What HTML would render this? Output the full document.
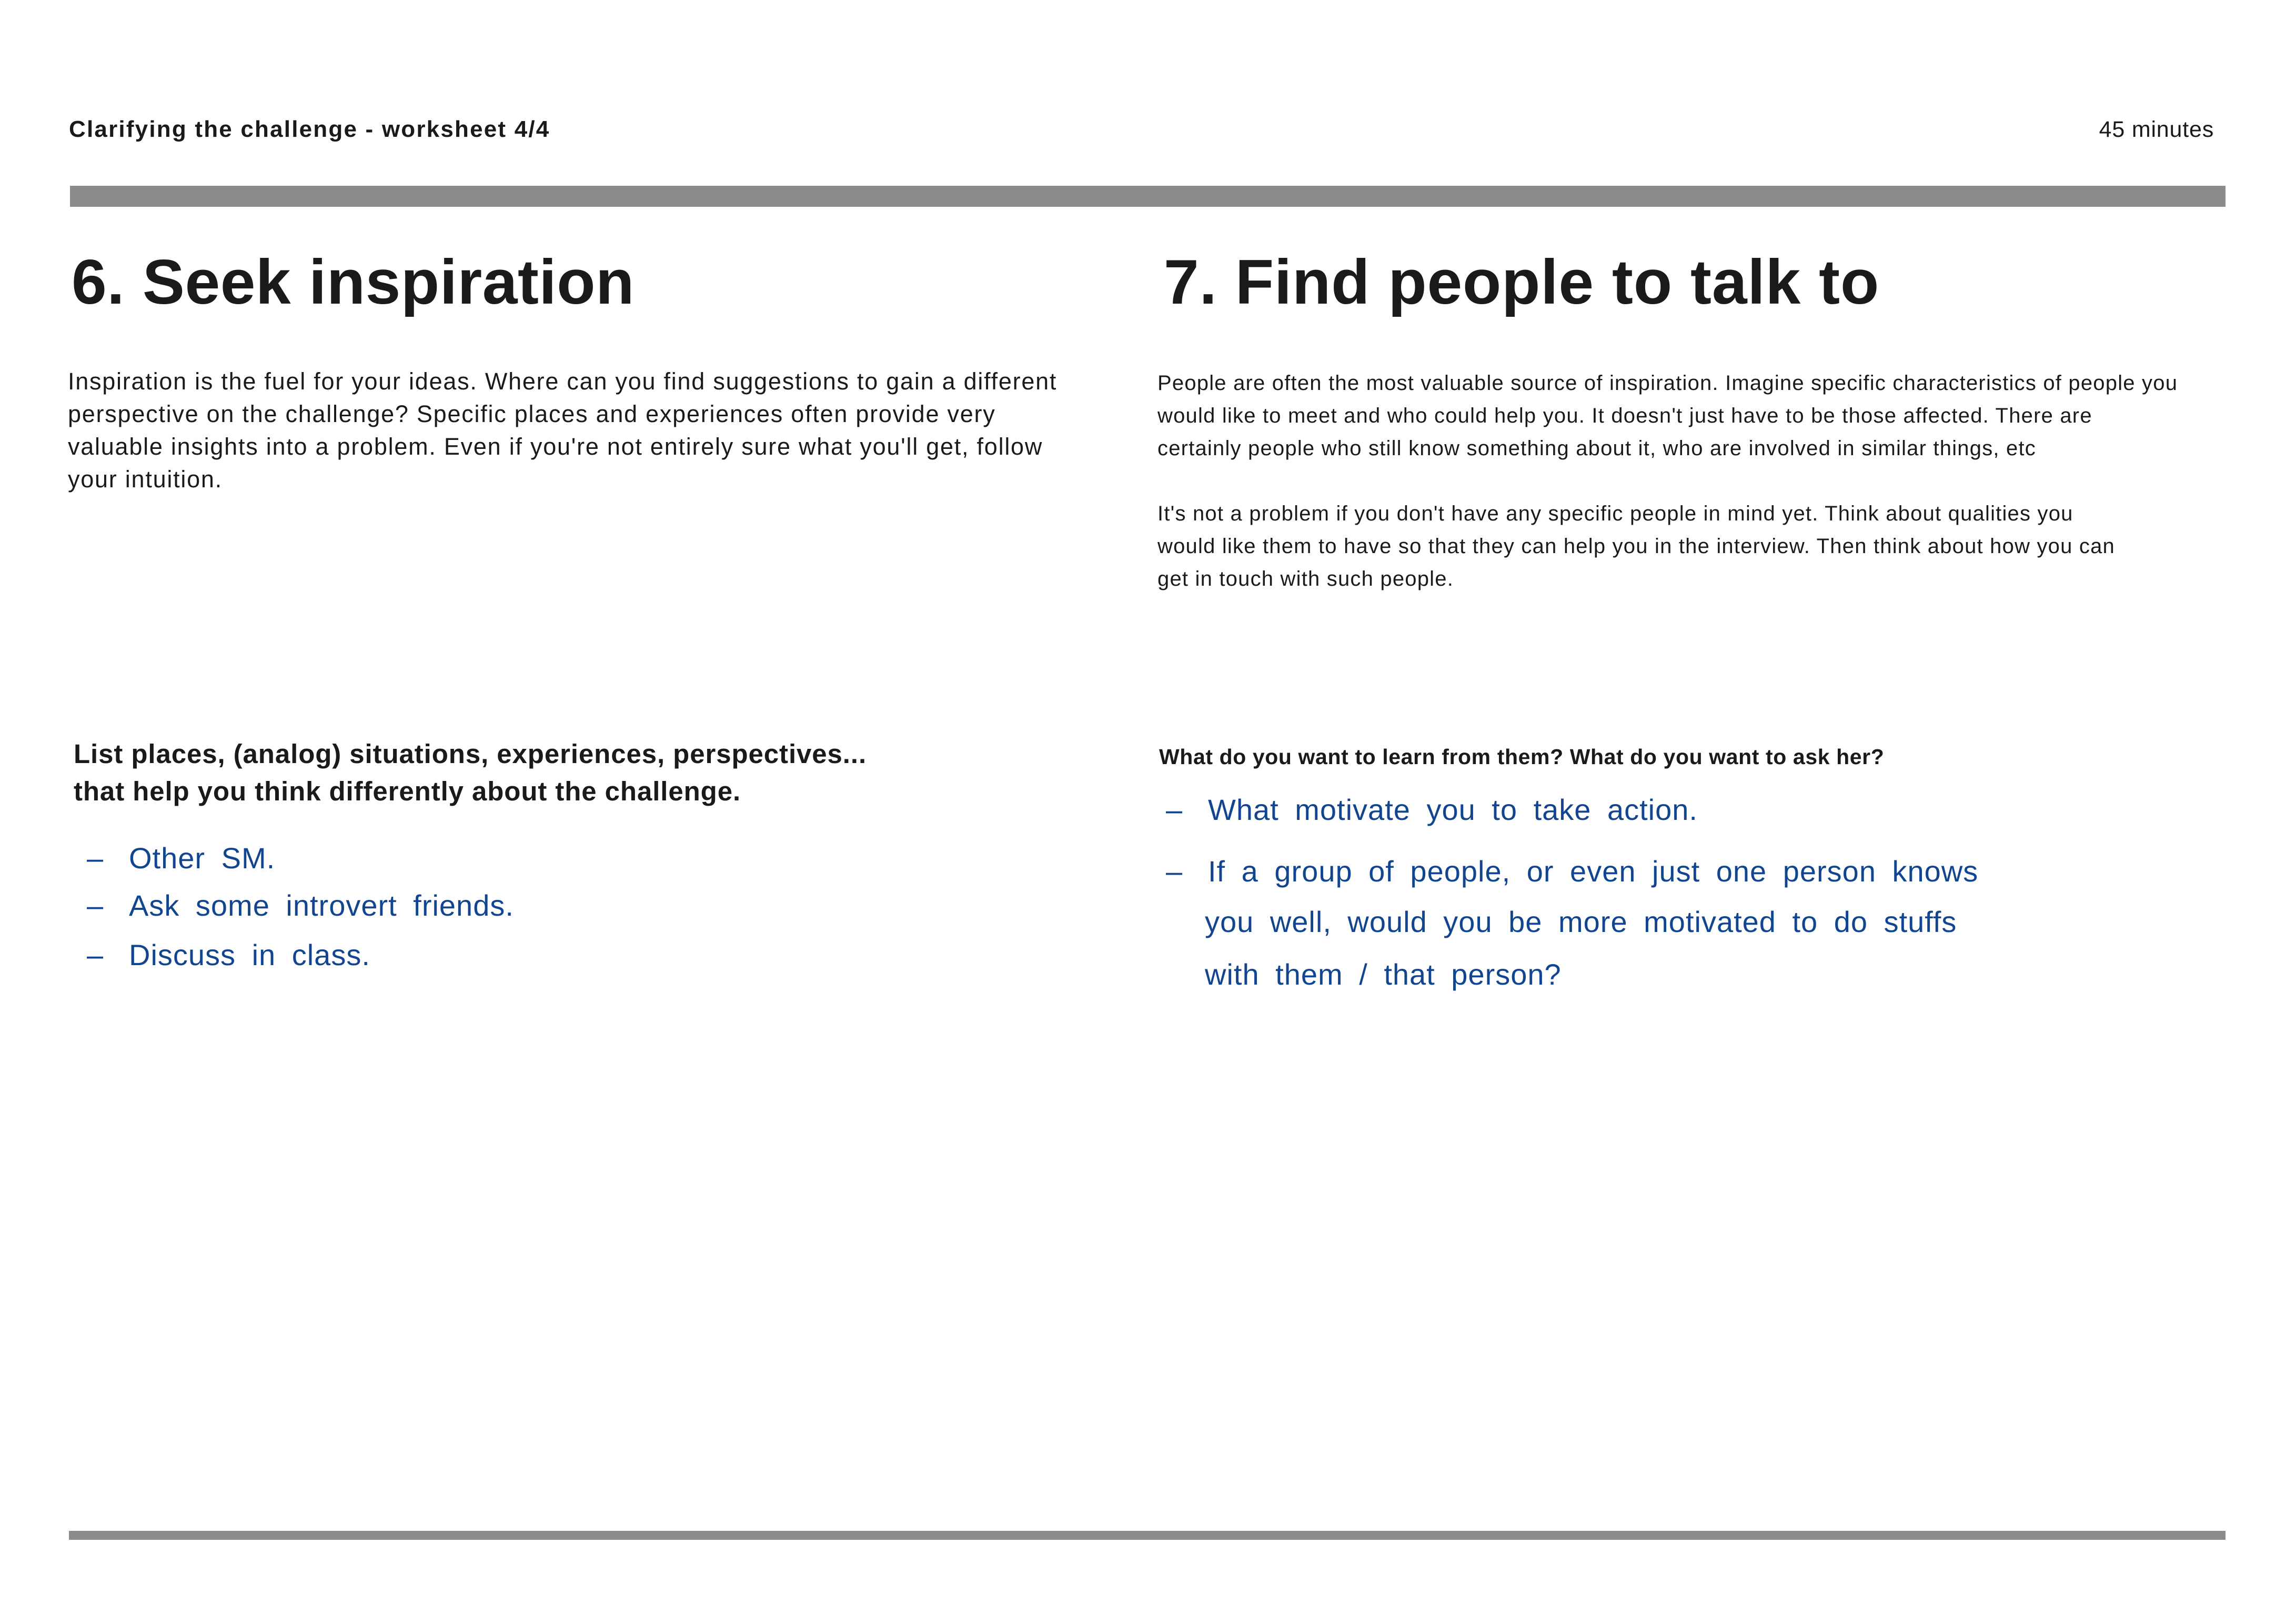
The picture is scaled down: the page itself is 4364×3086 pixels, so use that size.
<!DOCTYPE html>
<html><head><meta charset="utf-8"><style>
html,body{margin:0;padding:0;background:#fff;}
body{width:4364px;height:3086px;position:relative;overflow:hidden;font-family:"Liberation Sans",sans-serif;color:#1a1a1a;}
.a{position:absolute;white-space:nowrap;}
.bar{position:absolute;background:#8c8b8c;}
.hw{position:absolute;white-space:nowrap;color:#12458f;font-family:"Liberation Sans",sans-serif;font-size:56px;letter-spacing:1px;word-spacing:14px;}
.d{display:inline-block;width:80px;}
</style></head><body>
<div class="a" style="left:131px;top:219px;font-size:44px;font-weight:bold;line-height:54px;letter-spacing:2.2px;">Clarifying the challenge - worksheet 4/4</div>
<div class="a" style="right:156px;top:219px;font-size:43px;line-height:54px;letter-spacing:0.8px;">45 minutes</div>
<div class="bar" style="left:133px;top:353px;width:4097px;height:40px;"></div>

<div class="a" style="left:136px;top:466px;font-size:120px;font-weight:bold;line-height:140px;letter-spacing:0.5px;">6. Seek inspiration</div>
<div class="a" style="left:2212px;top:466px;font-size:120px;font-weight:bold;line-height:140px;letter-spacing:0.8px;">7. Find people to talk to</div>

<div class="a" style="left:129px;top:694px;font-size:45px;line-height:62px;letter-spacing:1.75px;">Inspiration is the fuel for your ideas. Where can you find suggestions to gain a different<br>perspective on the challenge? Specific places and experiences often provide very<br>valuable insights into a problem. Even if you're not entirely sure what you'll get, follow<br>your intuition.</div>

<div class="a" style="left:2200px;top:697px;font-size:40px;line-height:62px;letter-spacing:1.2px;">People are often the most valuable source of inspiration. Imagine specific characteristics of people you<br>would like to meet and who could help you. It doesn't just have to be those affected. There are<br>certainly people who still know something about it, who are involved in similar things, etc<br><br>It's not a problem if you don't have any specific people in mind yet. Think about qualities you<br>would like them to have so that they can help you in the interview. Then think about how you can<br>get in touch with such people.</div>

<div class="a" style="left:140px;top:1397px;font-size:51px;font-weight:bold;line-height:71px;letter-spacing:0.9px;">List places, (analog) situations, experiences, perspectives...<br>that help you think differently about the challenge.</div>
<div class="a" style="left:2203px;top:1413px;font-size:41px;font-weight:bold;line-height:50px;letter-spacing:0.6px;">What do you want to learn from them? What do you want to ask her?</div>

<div class="hw" style="left:165px;top:1598px;"><span class="d">–</span>Other SM.</div>
<div class="hw" style="left:165px;top:1688px;"><span class="d">–</span>Ask some introvert friends.</div>
<div class="hw" style="left:165px;top:1782px;"><span class="d">–</span>Discuss in class.</div>

<div class="hw" style="left:2216px;top:1506px;"><span class="d">–</span>What motivate you to take action.</div>
<div class="hw" style="left:2216px;top:1623px;"><span class="d">–</span>If a group of people, or even just one person knows</div>
<div class="hw" style="left:2290px;top:1719px;">you well, would you be more motivated to do stuffs</div>
<div class="hw" style="left:2290px;top:1819px;">with them / that person?</div>

<div class="bar" style="left:131px;top:2909px;width:4099px;height:17px;"></div>
</body></html>
